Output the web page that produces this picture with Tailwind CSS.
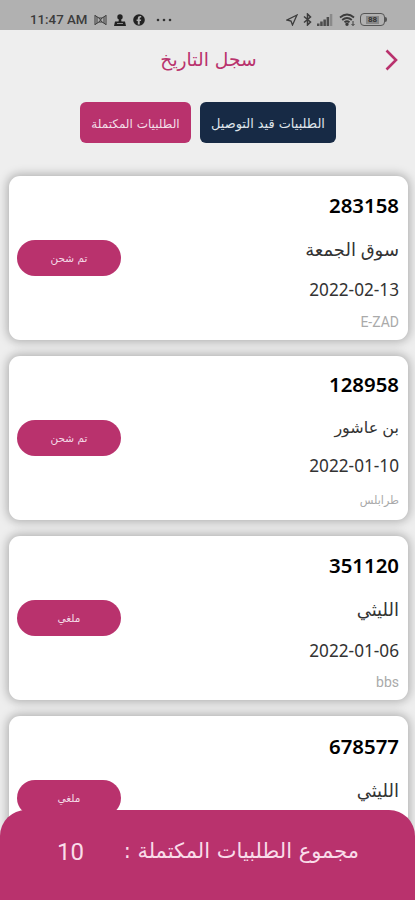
<!DOCTYPE html>
<html lang="ar">
<head>
<meta charset="utf-8">
<title>سجل التاريخ</title>
<script src="https://cdn.jsdelivr.net/npm/@tailwindcss/browser@4"></script>
</head>
<body class="bg-[#eeeeee]">
<div class="relative w-[415px] h-[900px] overflow-hidden bg-[#eeeeee] font-['Noto_Sans','DejaVu_Sans',sans-serif] flex flex-col">
  <div class="h-[30px] shrink-0 bg-[#b1b1b1] flex items-center justify-between pt-[9px] pl-[30px] pr-[28px] text-[#3c3c3c]">
    <div class="flex items-center">
      <span class="font-['Roboto',sans-serif] font-medium text-[13.300px] leading-[20px] w-[64px] whitespace-nowrap">11:47 AM</span>
      <svg class="w-[13px] h-[12px]" viewBox="0 0 13 12" fill="none" stroke="currentColor" stroke-width="1"><path d="M1 1v10M12 1v10M1 1.500l4 2.500h3l4-2.500M1 10.500l4-2.500h3l4 2.500M3 3v6M10 3v6M5 4l3 4M8 4L5 8"/></svg>
      <svg class="w-[12px] h-[12px] ml-[7px]" viewBox="0 0 12 12" fill="#222"><circle cx="6" cy="3" r="2.700"/><path d="M5 5h2l.5 2.500H11l1 4.500H0l1-4.500h3.500z"/><path d="M3 9.500h6" stroke="#aaa" stroke-width=".8"/></svg>
      <svg class="w-[12px] h-[12px] ml-[7px]" viewBox="0 0 12 12"><circle cx="6" cy="6" r="5.800" fill="#222"/><path d="M4.800 10.500V7H3.600V5.500h1.200V4q0-2.300 3.400-1.900v1.500q-1.500-.2-1.500.8v1.100h1.500L7.900 7H6.700v3.500z" fill="#b1b1b1"/></svg>
      <svg class="w-[16px] h-[4px] ml-[11px]" viewBox="0 0 16 4" fill="#333"><circle cx="2" cy="2" r="1.300"/><circle cx="8" cy="2" r="1.300"/><circle cx="14" cy="2" r="1.300"/></svg>
    </div>
    <div class="flex items-center">
      <svg class="w-[12px] h-[12px]" viewBox="0 0 12 12" fill="none" stroke="currentColor" stroke-width="1.300"><path d="M11 1L1 6l4 1 1.500 4z"/></svg>
      <svg class="w-[9px] h-[13px] ml-[5px]" viewBox="0 0 9 13" fill="none" stroke="currentColor" stroke-width="1.500"><path d="M1 3.500l6.500 5.500L4.500 12V1l3 3L1 9.500"/></svg>
      <svg class="w-[16px] h-[12px] ml-[5px]" viewBox="0 0 16 12" fill="#4c4c4c"><path d="M0 9.500h2.500V12H0zM3.200 7.500h2.500V12H3.200zM6.400 5.500h2.500V12H6.400zM9.600 3h2.500v9H9.600z"/><path d="M12.800 0h2.500v12h-2.500z" fill="#8a8a8a"/></svg>
      <svg class="w-[17px] h-[13px] ml-[6px]" viewBox="0 0 17 13" fill="none" stroke="currentColor" stroke-width="1.800"><path d="M1 4.500q7-6 14 0M3.200 7q4.800-4 9.600 0M5.500 9.200q2.500-2 5 0"/><circle cx="8" cy="11.300" r=".8" fill="currentColor"/><path d="M14 8v4.500M12.500 11l1.500 1.500 1.500-1.500" stroke-width="1"/></svg>
      <div class="ml-[4px] w-[25px] h-[13px] rounded-[4px] border-[1.500px] border-[#555] flex items-center justify-center"><span class="bg-[#888] text-[#333] font-['Roboto',sans-serif] font-bold text-[8px] leading-[8px] px-[2px]">88</span></div>
      <div class="w-[2px] h-[5px] rounded-r bg-[#555]"></div>
    </div>
  </div>

  <div class="h-[60px] shrink-0 grid grid-cols-[40px_1fr_38px] items-center">
    <span></span>
    <h1 dir="rtl" class="text-center text-[18.700px] leading-[56px] text-[#b9326d] font-['DejaVu_Sans',sans-serif]">سجل التاريخ</h1>
    <svg class="w-[14px] h-[22px] ml-[8px]" viewBox="0 0 14 22" fill="none" stroke="#b9326d" stroke-width="2.600"><path d="M1.500 1.500l9.500 9.500-9.500 9.500"/></svg>
  </div>

  <div class="h-[86px] shrink-0 pt-[12px] pl-[80px] flex gap-[9px] text-[#f3dfe8] leading-[44px] text-center font-['DejaVu_Sans',sans-serif]">
    <div dir="rtl" class="w-[111px] h-[41px] rounded-[6px] bg-[#b9326d] text-[12px] whitespace-nowrap">الطلبيات المكتملة</div>
    <div dir="rtl" class="w-[136px] h-[41px] rounded-[6px] bg-[#172a45] text-[#dfe4ea] text-[12.900px] whitespace-nowrap">الطلبيات قيد التوصيل</div>
  </div>

  <div class="flex flex-col gap-[16px] px-[9px]">
    <div class="w-[399px] h-[164px] rounded-[11px] bg-white shadow-[0_0_10px_2px_rgba(0,0,0,0.26)] flex items-center justify-between pl-[8px] pr-[9px]">
      <div dir="rtl" class="w-[104px] h-[36px] rounded-full bg-[#b9326d] text-[#f5dde8] text-[10.500px] leading-[37px] text-center font-['DejaVu_Sans',sans-serif]">تم شحن</div>
      <div class="h-full pt-[9px] text-right text-[#333]">
        <div class="h-[40px] leading-[40px] text-[20.400px] font-semibold text-black">283158</div>
        <div dir="rtl" class="h-[48px] leading-[48px] text-[18px]">سوق الجمعة</div>
        <div class="h-[34px] leading-[34px] text-[17.200px]">2022-02-13</div>
        <div class="h-[28px] leading-[30px] text-[14px] text-[#aaa] font-['Roboto',sans-serif]">E-ZAD</div>
      </div>
    </div>
    <div class="w-[399px] h-[164px] rounded-[11px] bg-white shadow-[0_0_10px_2px_rgba(0,0,0,0.26)] flex items-center justify-between pl-[8px] pr-[9px]">
      <div dir="rtl" class="w-[104px] h-[36px] rounded-full bg-[#b9326d] text-[#f5dde8] text-[10.500px] leading-[37px] text-center font-['DejaVu_Sans',sans-serif]">تم شحن</div>
      <div class="h-full pt-[9px] text-right text-[#333]">
        <div class="h-[38px] leading-[38px] text-[20.400px] font-semibold text-black">128958</div>
        <div dir="rtl" class="h-[46px] leading-[48px] text-[16px]">بن عاشور</div>
        <div class="h-[34px] leading-[34px] text-[17.200px]">2022-01-10</div>
        <div dir="rtl" class="h-[32px] leading-[34px] text-[11.200px] text-[#aaa]">طرابلس</div>
      </div>
    </div>
    <div class="w-[399px] h-[164px] rounded-[11px] bg-white shadow-[0_0_10px_2px_rgba(0,0,0,0.26)] flex items-center justify-between pl-[8px] pr-[9px]">
      <div dir="rtl" class="w-[104px] h-[36px] rounded-full bg-[#b9326d] text-[#f5dde8] text-[10.500px] leading-[37px] text-center font-['DejaVu_Sans',sans-serif]">ملغي</div>
      <div class="h-full pt-[9px] text-right text-[#333]">
        <div class="h-[40px] leading-[40px] text-[20.400px] font-semibold text-black">351120</div>
        <div dir="rtl" class="h-[48px] leading-[48px] text-[18px]">الليثي</div>
        <div class="h-[34px] leading-[36px] text-[17.200px]">2022-01-06</div>
        <div class="h-[28px] leading-[31px] text-[14px] text-[#aaa] font-['Roboto',sans-serif]">bbs</div>
      </div>
    </div>
    <div class="w-[399px] h-[164px] rounded-[11px] bg-white shadow-[0_0_10px_2px_rgba(0,0,0,0.26)] flex items-center justify-between pl-[8px] pr-[9px]">
      <div dir="rtl" class="w-[104px] h-[36px] rounded-full bg-[#b9326d] text-[#f5dde8] text-[10.500px] leading-[37px] text-center font-['DejaVu_Sans',sans-serif]">ملغي</div>
      <div class="h-full pt-[10px] text-right text-[#333]">
        <div class="h-[40px] leading-[40px] text-[20.400px] font-semibold text-black">678577</div>
        <div dir="rtl" class="h-[48px] leading-[48px] text-[18px]">الليثي</div>
      </div>
    </div>
  </div>

  <div class="absolute left-0 bottom-0 w-[415px] h-[90px] rounded-t-[26px] bg-[#b9326d] text-[#f9dce9] flex justify-between pl-[57px] pr-[56px]">
    <span class="text-[24px] leading-[85px] font-['Roboto',sans-serif]">10</span>
    <span dir="rtl" class="text-[21px] leading-[82px] whitespace-nowrap font-['DejaVu_Sans',sans-serif]">مجموع الطلبيات المكتملة :</span>
  </div>
</div>
</body>
</html>
